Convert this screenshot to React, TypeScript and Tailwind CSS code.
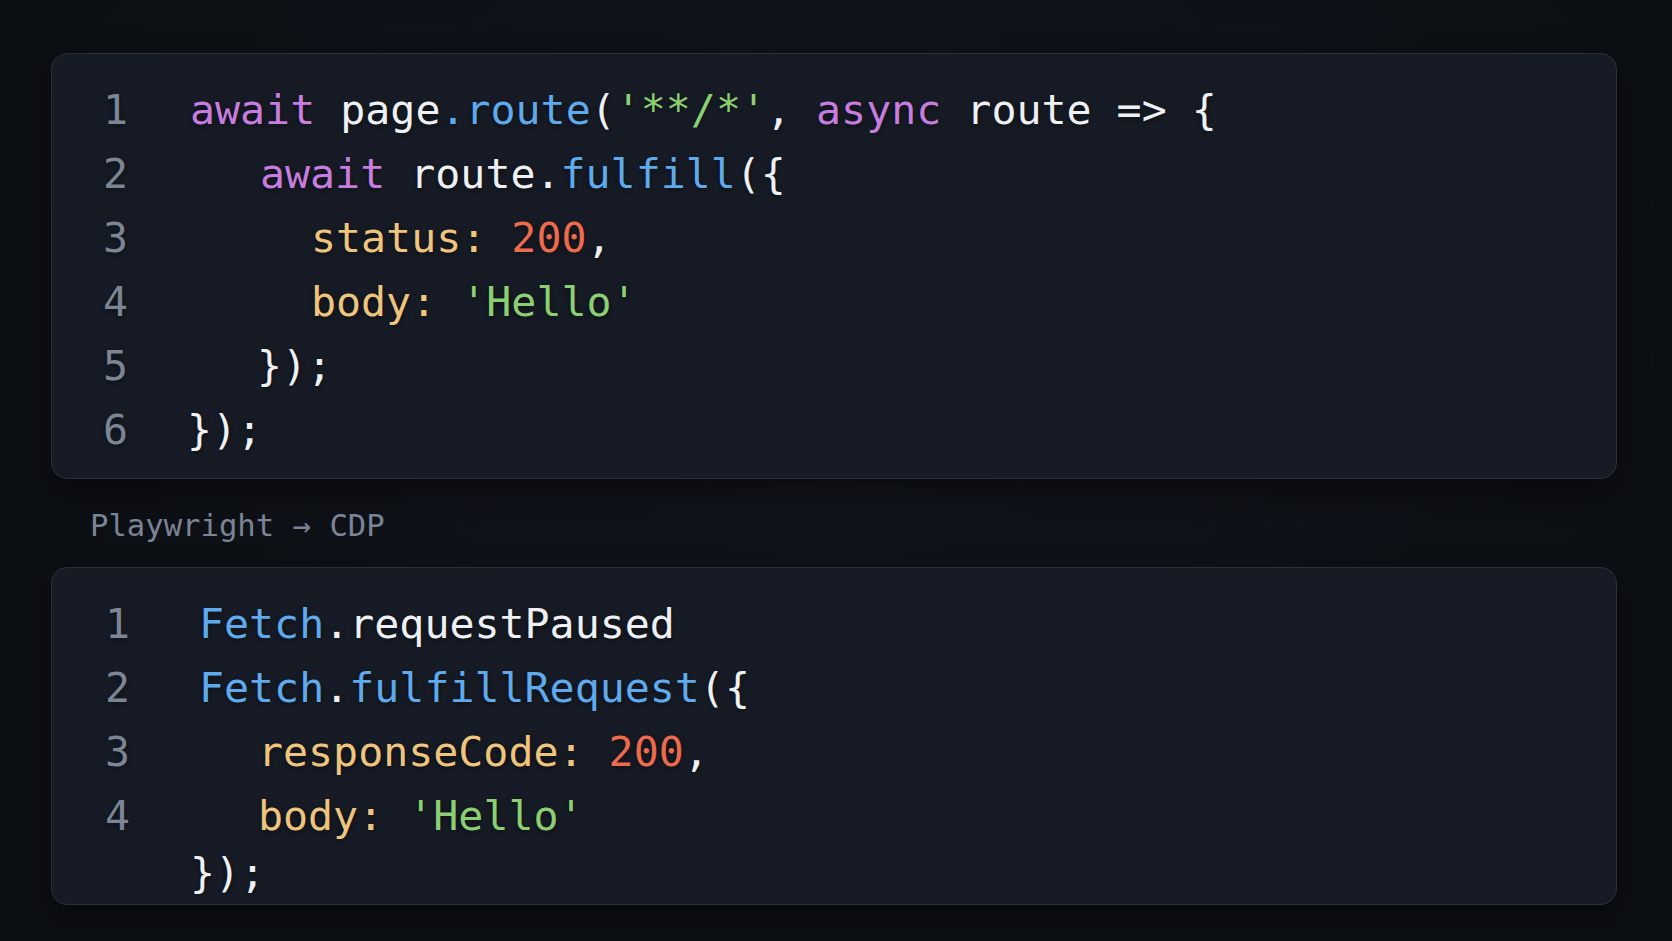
import React from "react";

type Tok = { t: string; c?: string };

const P = "text-[#c77ddf]"; // keyword
const B = "text-[#5eaaec]"; // function
const G = "text-[#8ccf72]"; // string
const Y = "text-[#efc47c]"; // property
const R = "text-[#ee6a4d]"; // number

const first: { n: string; pad: string; toks: Tok[] }[] = [
  {
    n: "1",
    pad: "pl-0",
    toks: [
      { t: "await", c: P },
      { t: " page" },
      { t: ".route", c: B },
      { t: "(" },
      { t: "'**/*'", c: G },
      { t: ", " },
      { t: "async", c: P },
      { t: " route => {" },
    ],
  },
  {
    n: "2",
    pad: "pl-[70px]",
    toks: [
      { t: "await", c: P },
      { t: " route." },
      { t: "fulfill", c: B },
      { t: "({" },
    ],
  },
  {
    n: "3",
    pad: "pl-[121px]",
    toks: [
      { t: "status:", c: Y },
      { t: " " },
      { t: "200", c: R },
      { t: "," },
    ],
  },
  {
    n: "4",
    pad: "pl-[121px]",
    toks: [
      { t: "body:", c: Y },
      { t: " " },
      { t: "'Hello'", c: G },
    ],
  },
  { n: "5", pad: "pl-[67px]", toks: [{ t: "});" }] },
  { n: "6", pad: "-ml-[3px]", toks: [{ t: "});" }] },
];

const second: { n: string; pad: string; toks: Tok[] }[] = [
  {
    n: "1",
    pad: "pl-0",
    toks: [{ t: "Fetch", c: B }, { t: ".requestPaused" }],
  },
  {
    n: "2",
    pad: "pl-0",
    toks: [
      { t: "Fetch", c: B },
      { t: "." },
      { t: "fulfillRequest", c: B },
      { t: "({" },
    ],
  },
  {
    n: "3",
    pad: "pl-[59px]",
    toks: [
      { t: "responseCode:", c: Y },
      { t: " " },
      { t: "200", c: R },
      { t: "," },
    ],
  },
  {
    n: "4",
    pad: "pl-[59px]",
    toks: [
      { t: "body:", c: Y },
      { t: " " },
      { t: "'Hello'", c: G },
    ],
  },
];

function Line({ n, pad, toks, numCol }: { n: string; pad: string; toks: Tok[]; numCol: string }) {
  return (
    <div className="flex h-[64px] leading-[64px] whitespace-pre">
      <span className={`${numCol} shrink-0 text-[#7b8596]`}>{n}</span>
      <span className={pad}>
        {toks.map((k, i) => (
          <span key={i} className={k.c ?? "text-[#eef0f3]"}>
            {k.t}
          </span>
        ))}
      </span>
    </div>
  );
}

export default function App() {
  return (
    <div className="min-h-screen w-full bg-[radial-gradient(ellipse_at_50%_30%,#12161d_0%,#0c0f14_70%)] pl-[51px] pr-[55px] pt-[53px] pb-[36px] font-['DejaVu_Sans_Mono','Liberation_Mono',monospace] antialiased">
      {/* route snippet */}
      <div className="rounded-[16px] border border-[#2a303b] bg-[#161b25] pt-[24px] pb-[16px] text-[41.6px] shadow-[0_10px_30px_rgba(0,0,0,0.45)] [text-shadow:0_2px_6px_rgba(0,0,0,0.5)]">
        {first.map((l) => (
          <Line key={l.n} {...l} numCol="w-[138px] pl-[51px]" />
        ))}
      </div>

      <div className="mt-[27px] mb-[21px] h-[40px] pl-[39px] text-[30.6px] leading-[40px] text-[#7a8496]">
        Playwright → CDP
      </div>

      {/* cdp snippet */}
      <div className="h-[338px] overflow-hidden rounded-[16px] border border-[#2a303b] bg-[#161b25] pt-[24px] text-[41.6px] shadow-[0_10px_30px_rgba(0,0,0,0.45)] [text-shadow:0_2px_6px_rgba(0,0,0,0.5)]">
        {second.map((l) => (
          <Line key={l.n} {...l} numCol="w-[147px] pl-[53px]" />
        ))}
        <div className="-mt-[7px]">
          <Line n="" pad="pl-0" toks={[{ t: "});" }]} numCol="w-[138px] pl-[53px]" />
        </div>
      </div>
    </div>
  );
}
